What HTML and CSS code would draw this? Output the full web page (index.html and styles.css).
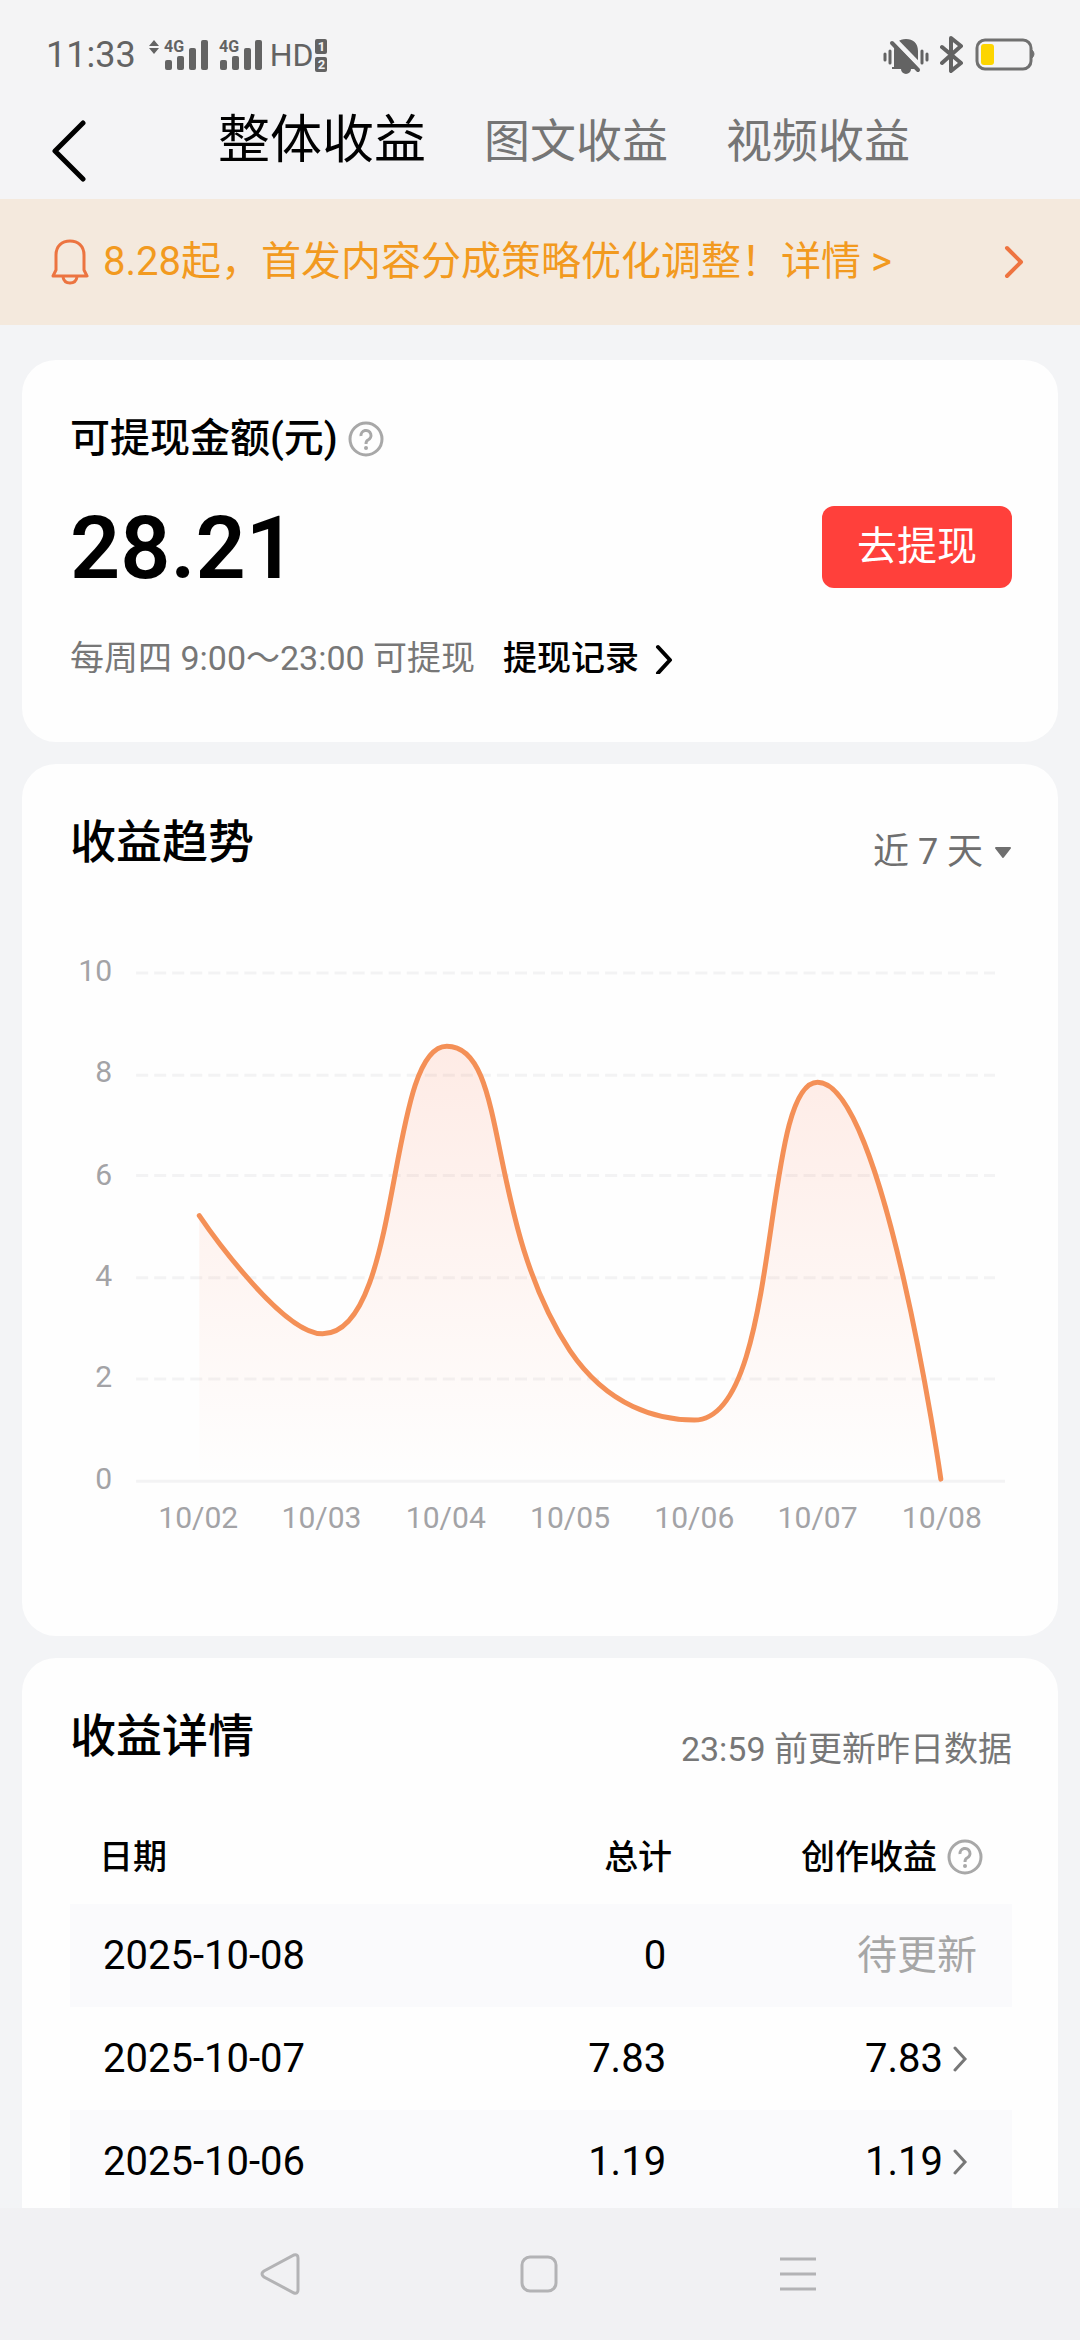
FILE: index.html
```html
<!DOCTYPE html>
<html lang="zh-CN">
<head>
    <meta charset="UTF-8">
    <meta name="viewport" content="width=device-width, initial-scale=1.0">
    <title>整体收益</title>
    <link rel="stylesheet" href="styles.css">
</head>
<body>
    <div class="app">
        <div class="status-bar">
            <div class="status-left">
                <span class="time">11:33</span>
                <svg class="signals" width="116" height="34" viewBox="0 0 116 34">
                    <path d="M1 8L6 2L11 8ZM1 10L6 16L11 10Z"/>
                    <text x="16" y="14">4G</text>
                    <rect x="17" y="22" width="7" height="10" rx="2"/>
                    <rect x="29" y="18" width="7" height="14" rx="2"/>
                    <rect x="41" y="10" width="7" height="22" rx="2"/>
                    <rect x="53" y="2" width="7" height="30" rx="2"/>
                    <text x="71" y="14">4G</text>
                    <rect x="72" y="22" width="7" height="10" rx="2"/>
                    <rect x="84" y="18" width="7" height="14" rx="2"/>
                    <rect x="96" y="10" width="7" height="22" rx="2"/>
                    <rect x="107" y="2" width="7" height="30" rx="2"/>
                </svg>
                <span class="hd">HD</span>
                <span class="sims"><i>1</i><i>2</i></span>
            </div>
            <div class="status-right">
                <svg width="48" height="38" viewBox="0 0 48 38">
                    <path d="M12 31V15C12 7 17 3 24 3S36 7 36 15V27L39 31V33H29A5 5 0 0 1 19 33H10V31Z" fill="#636363"/>
                    <path d="M12 3L42 34" stroke="#f4f4f5" stroke-width="5"/>
                    <path d="M10 7L36 34" stroke="#636363" stroke-width="4" stroke-linecap="round"/>
                    <path d="M3 18V24M8 15V27M40 15V27M45 18V24" stroke="#636363" stroke-width="3" stroke-linecap="round"/>
                </svg>
                <svg width="24" height="40" viewBox="0 0 24 40">
                    <path d="M2 12L21 28L11 36V3L21 11L2 28" fill="none" stroke="#636363" stroke-width="4" stroke-linejoin="round" stroke-linecap="round"/>
                </svg>
                <svg width="62" height="34" viewBox="0 0 62 34">
                    <rect x="3" y="2" width="54" height="29" rx="8" fill="none" stroke="#707070" stroke-width="3"/>
                    <path d="M58 12Q62 16 58 20Z" fill="#707070" stroke="#707070"/>
                    <rect x="7" y="6" width="13" height="21" rx="3" fill="#fdd500"/>
                </svg>
            </div>
        </div>

        <header class="header">
            <button class="back" aria-label="返回">
                <svg width="34" height="62" viewBox="0 0 34 62">
                    <path d="M31 3L3 31L31 59" fill="none" stroke="#000" stroke-width="5" stroke-linecap="round" stroke-linejoin="round"/>
                </svg>
            </button>
            <nav class="tabs">
                <button class="tab active">整体收益</button>
                <button class="tab">图文收益</button>
                <button class="tab">视频收益</button>
            </nav>
        </header>

        <a class="notice" href="#">
            <svg width="38" height="46" viewBox="0 0 38 46">
                <path d="M2 37L5 31V16C5 7 11 2 19 2S33 7 33 16V31L36 37Z" fill="none" stroke="#ec7440" stroke-width="3" stroke-linejoin="round"/>
                <path d="M12 38Q13 44 19 44T26 38" fill="none" stroke="#ec7440" stroke-width="3"/>
            </svg>
            <span class="notice-text">8.28起，首发内容分成策略优化调整！详情 &gt;</span>
            <svg width="20" height="34" viewBox="0 0 20 34">
                <path d="M3 3L17 17L3 31" fill="none" stroke="#ee7440" stroke-width="4" stroke-linecap="round" stroke-linejoin="round"/>
            </svg>
        </a>

        <main class="content">
            <section class="card balance">
                <h2 class="balance-title">可提现金额(元)
                    <svg class="help" viewBox="0 0 36 36">
                        <circle cx="18" cy="18" r="16"/>
                        <path d="M13 15A5 5 0 1 1 20 19Q18 20 18 23"/>
                        <circle class="dot" cx="18" cy="27" r="2"/>
                    </svg>
                </h2>
                <div class="balance-row">
                    <strong class="amount">28.21</strong>
                    <button class="withdraw">去提现</button>
                </div>
                <p class="balance-note">每周四 9:00～23:00 可提现
                    <a class="records" href="#">提现记录
                        <svg width="18" height="32" viewBox="0 0 18 32">
                            <path d="M3 5L15 18L3 31" fill="none" stroke="#000" stroke-width="4" stroke-linecap="round" stroke-linejoin="round"/>
                        </svg>
                    </a>
                </p>
            </section>

            <section class="card trend">
                <div class="card-head">
                    <h2>收益趋势</h2>
                    <label class="range">
                        <select aria-label="时间范围">
                            <option>近 7 天</option>
                        </select>
                        <svg width="18" height="14" viewBox="0 0 18 14">
                            <path d="M2 3H16L9 12Z" fill="#6f6f6f" stroke="#6f6f6f" stroke-width="2" stroke-linejoin="round"/>
                        </svg>
                    </label>
                </div>
                <svg class="chart" viewBox="0 0 940 600">
                    <defs>
                        <linearGradient id="area" x1="0" y1="0" x2="0" y2="1">
                            <stop offset="0" stop-color="#ff6030" stop-opacity="0.12"/>
                            <stop offset="1" stop-color="#ff6030" stop-opacity="0"/>
                        </linearGradient>
                    </defs>
                    <g class="grid">
                        <path d="M66 33H923M66 135H923M66 235H923M66 337H923M66 438H923"/>
                        <path class="axis" d="M66 540H933"/>
                    </g>
                    <path fill="url(#area)" d="M129 275C129 275 209 393 252 393C332 393 316 106 376 106C439 106 413 280 499 410C537 466 587 479 623 479C711 479 689 142 746 142C812 142 869 540 869 540H129Z"/>
                    <path class="line" d="M129 275C129 275 209 393 252 393C332 393 316 106 376 106C439 106 413 280 499 410C537 466 587 479 623 479C711 479 689 142 746 142C812 142 869 538 869 538"/>
                    <g class="y-labels">
                        <text x="42" y="41">10</text>
                        <text x="42" y="142">8</text>
                        <text x="42" y="244">6</text>
                        <text x="42" y="345">4</text>
                        <text x="42" y="446">2</text>
                        <text x="42" y="548">0</text>
                    </g>
                    <g class="x-labels">
                        <text x="128" y="587">10/02</text>
                        <text x="251" y="587">10/03</text>
                        <text x="375" y="587">10/04</text>
                        <text x="499" y="587">10/05</text>
                        <text x="623" y="587">10/06</text>
                        <text x="746" y="587">10/07</text>
                        <text x="870" y="587">10/08</text>
                    </g>
                </svg>
            </section>

            <section class="card details">
                <div class="card-head">
                    <h2>收益详情</h2>
                    <span class="update-note">23:59 前更新昨日数据</span>
                </div>
                <table>
                    <thead>
                        <tr>
                            <th class="col-date">日期</th>
                            <th class="col-total">总计</th>
                            <th>
                                <span class="cell">创作收益
                                    <svg class="help" viewBox="0 0 36 36">
                                        <circle cx="18" cy="18" r="16"/>
                                        <path d="M13 15A5 5 0 1 1 20 19Q18 20 18 23"/>
                                        <circle class="dot" cx="18" cy="27" r="2"/>
                                    </svg>
                                </span>
                            </th>
                        </tr>
                    </thead>
                    <tbody>
                        <tr>
                            <td>2025-10-08</td>
                            <td>0</td>
                            <td class="pending">待更新</td>
                        </tr>
                        <tr>
                            <td>2025-10-07</td>
                            <td>7.83</td>
                            <td>
                                <span class="cell">7.83
                                    <svg width="24" height="26" viewBox="0 0 24 26">
                                        <path d="M2 2L12 13L2 24" fill="none" stroke="#777" stroke-width="3" stroke-linecap="round"/>
                                    </svg>
                                </span>
                            </td>
                        </tr>
                        <tr>
                            <td>2025-10-06</td>
                            <td>1.19</td>
                            <td>
                                <span class="cell">1.19
                                    <svg width="24" height="26" viewBox="0 0 24 26">
                                        <path d="M2 2L12 13L2 24" fill="none" stroke="#777" stroke-width="3" stroke-linecap="round"/>
                                    </svg>
                                </span>
                            </td>
                        </tr>
                    </tbody>
                </table>
            </section>
        </main>

        <nav class="system-nav">
            <button aria-label="后退">
                <svg width="40" height="42" viewBox="0 0 40 42">
                    <path d="M4 18L34 2Q38 1 38 5V37Q38 41 34 40L4 24Q0 21 4 18Z"/>
                </svg>
            </button>
            <button aria-label="主页">
                <svg width="40" height="42" viewBox="0 0 40 42">
                    <rect x="3" y="4" width="34" height="34" rx="8"/>
                </svg>
            </button>
            <button aria-label="最近任务">
                <svg width="40" height="42" viewBox="0 0 40 42">
                    <path d="M2 6H38M2 21H38M2 36H38"/>
                </svg>
            </button>
        </nav>
    </div>
</body>
</html>
```

FILE: styles.css
```css
* {
    box-sizing: border-box;
}
body {
    font-family: Roboto, "Noto Sans CJK SC", sans-serif;
    background-color: #f3f4f6;
    color: #000;
    margin: 0;
}
button, select {
    font-family: inherit;
    border: none;
    background: none;
    padding: 0;
    cursor: pointer;
}
a {
    color: inherit;
    text-decoration: none;
}
h2, p {
    margin: 0;
}
svg {
    display: block;
    flex: none;
}
.app {
    display: flex;
    flex-direction: column;
    height: 100vh;
}

/* status bar */
.status-bar {
    display: flex;
    justify-content: space-between;
    align-items: center;
    height: 80px;
    padding: 30px 44px 0 46px;
    background-color: #f4f4f5;
    color: #636363;
}
.status-left, .status-right {
    display: flex;
    align-items: center;
}
.status-right {
    gap: 10px;
}
.time {
    font-size: 36px;
    margin-right: 12px;
}
.signals {
    fill: #636363;
    font-size: 16px;
    font-weight: 700;
}
.hd {
    font-size: 32px;
    margin-left: 6px;
}
.sims {
    display: flex;
    flex-direction: column;
    gap: 3px;
    margin-left: 2px;
}
.sims i {
    width: 12px;
    height: 15px;
    border-radius: 2px;
    background-color: #636363;
    color: #f4f4f5;
    font-size: 13px;
    font-style: normal;
    font-weight: 700;
    line-height: 15px;
    text-align: center;
}

/* header */
.header {
    display: flex;
    align-items: flex-end;
    gap: 132px;
    height: 119px;
    padding: 0 54px 17px 52px;
    background-color: #f4f4f6;
}
.tabs {
    display: flex;
    gap: 58px;
}
.tab {
    color: #757575;
    font-size: 46px;
    line-height: 82px;
}
.tab.active {
    color: #000;
    font-size: 52px;
}

/* notice */
.notice {
    display: flex;
    align-items: center;
    gap: 14px;
    height: 126px;
    padding: 0 56px 0 51px;
    background-color: #f4e9dd;
    color: #f29a1f;
    font-size: 40px;
    line-height: 40px;
}
.notice-text {
    flex: 1;
}

/* cards */
.content {
    flex: 1;
    min-height: 0;
    overflow: hidden;
    display: flex;
    flex-direction: column;
    gap: 22px;
    padding: 35px 22px 0;
}
.card {
    flex: none;
    background-color: #fefefe;
    border-radius: 34px;
    padding: 48px 46px 48px 48px;
}
.card-head {
    display: flex;
    justify-content: space-between;
    align-items: flex-end;
}
.card-head h2 {
    font-size: 46px;
    font-weight: 500;
    line-height: 60px;
}
.help {
    width: 36px;
    height: 36px;
    fill: none;
    stroke: #a8a8a8;
    stroke-width: 3;
}
.help .dot {
    fill: #a8a8a8;
    stroke: none;
}
.balance {
    padding-bottom: 64px;
}
.balance-title {
    display: flex;
    align-items: center;
    gap: 10px;
    font-size: 40px;
    font-weight: 500;
    line-height: 62px;
}
.balance-row {
    display: flex;
    justify-content: space-between;
    align-items: center;
    height: 82px;
    margin: 36px 0 50px;
}
.amount {
    font-size: 88px;
    font-weight: 600;
}
.withdraw {
    width: 190px;
    height: 82px;
    border-radius: 12px;
    background-color: #ff403b;
    color: #fff;
    font-size: 40px;
    line-height: 40px;
}
.balance-note {
    display: flex;
    gap: 28px;
    color: #777;
    font-size: 34px;
    line-height: 40px;
}
.records {
    display: flex;
    align-items: center;
    gap: 16px;
    color: #000;
    font-weight: 500;
}

/* trend chart */
.trend {
    padding-bottom: 95px;
}
.range {
    display: flex;
    align-items: center;
    gap: 10px;
    color: #6f6f6f;
}
.range select {
    appearance: none;
    color: inherit;
    font-size: 36px;
    height: 40px;
    line-height: 40px;
}
.chart {
    width: 100%;
    margin-top: 68px;
    font-size: 30px;
    fill: #a3a3a6;
}
.grid {
    fill: none;
    stroke: #f3f3f4;
    stroke-width: 3;
    stroke-dasharray: 12 6;
}
.grid .axis {
    stroke-dasharray: none;
}
.line {
    fill: none;
    stroke: #f49057;
    stroke-width: 5;
    stroke-linecap: round;
}
.y-labels {
    text-anchor: end;
}
.x-labels {
    text-anchor: middle;
}

/* details table */
.update-note {
    color: #777;
    font-size: 34px;
    line-height: 34px;
}
table {
    width: 100%;
    margin-top: 44px;
    border-collapse: collapse;
    table-layout: fixed;
}
th {
    height: 94px;
    padding: 0 29px;
    font-size: 34px;
    font-weight: 500;
    line-height: 34px;
    text-align: right;
}
td {
    height: 103px;
    padding: 0 35px 0 33px;
    font-size: 40px;
    line-height: 40px;
    text-align: right;
}
th:first-child, td:first-child {
    text-align: left;
}
tbody tr:nth-child(odd) {
    background-color: #fafafc;
}
.col-date {
    width: 32%;
}
.col-total {
    width: 35%;
}
.cell {
    display: flex;
    justify-content: flex-end;
    align-items: center;
    gap: 10px;
}
.pending {
    color: #a6a6a6;
}

/* system navigation */
.system-nav {
    display: flex;
    justify-content: space-between;
    align-items: center;
    height: 132px;
    padding: 0 262px 0 260px;
    background-color: #f1f1f3;
}
.system-nav svg {
    fill: none;
    stroke: #b3b3b5;
    stroke-width: 3;
}
```
